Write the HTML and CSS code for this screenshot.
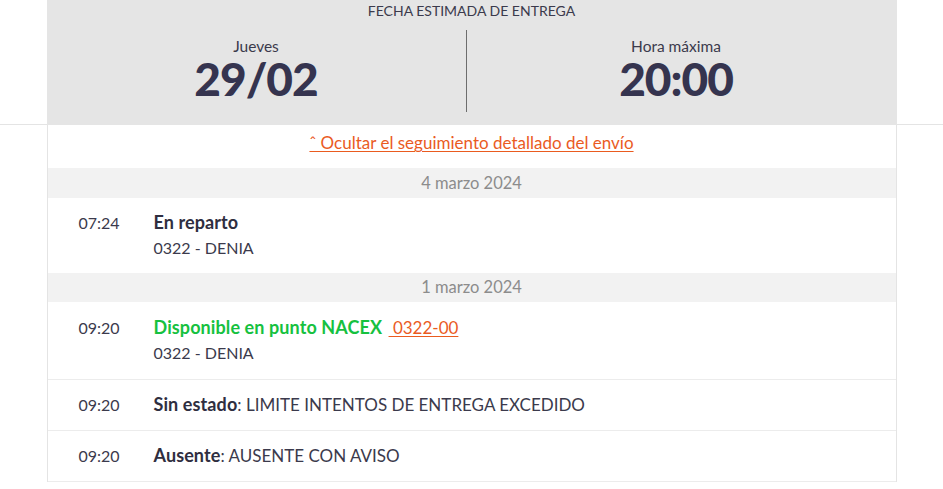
FILE: index.html
```html
<!DOCTYPE html>
<html lang="es">
<head>
<meta charset="utf-8">
<title>Seguimiento</title>
<link rel="stylesheet" href="styles.css">
</head>
<body>
<div class="top">
  <div class="hero">
    <div class="hero-title">FECHA ESTIMADA DE ENTREGA</div>
    <div class="hero-cols">
      <div class="hero-col hero-col-left">
        <div class="hero-label">Jueves</div>
        <div class="hero-value">29/02</div>
      </div>
      <div class="hero-col">
        <div class="hero-label">Hora máxima</div>
        <div class="hero-value">20:00</div>
      </div>
    </div>
  </div>
</div>
<div class="panel">
  <div class="toggle"><a href="#" class="toggle-link">ˆ Ocultar el seguimiento detallado del envío</a></div>
  <div class="day">4 marzo 2024</div>
  <div class="event event-first">
    <div class="time">07:24</div>
    <div class="info">
      <div class="line"><b>En reparto</b></div>
      <div class="line place">0322 - DENIA</div>
    </div>
  </div>
  <div class="day day-short">1 marzo 2024</div>
  <div class="event event-double">
    <div class="time">09:20</div>
    <div class="info">
      <div class="line"><b class="green">Disponible en punto NACEX</b> <a href="#" class="code-link">&nbsp;0322-00</a></div>
      <div class="line place">0322 - DENIA</div>
    </div>
  </div>
  <div class="event">
    <div class="time">09:20</div>
    <div class="info"><div class="line"><b>Sin estado</b>: LIMITE INTENTOS DE ENTREGA EXCEDIDO</div></div>
  </div>
  <div class="event">
    <div class="time">09:20</div>
    <div class="info"><div class="line"><b>Ausente</b>: AUSENTE CON AVISO</div></div>
  </div>
</div>
</body>
</html>
```
FILE: styles.css
```css
* { box-sizing: border-box; }
html, body { margin: 0; padding: 0; background: #fff; }
body {
  font-family: Lato, "Open Sans", "Liberation Sans", sans-serif;
  color: #3b3a4c;
  font-size: 16px;
}
.top {
  height: 125px;
  border-bottom: 1px solid #e4e4e4;
}
.hero {
  width: 850px;
  height: 125px;
  margin: 0 auto;
  background: #e5e5e5;
  padding-top: 2px;
}
.hero-title {
  text-align: center;
  font-size: 14px;
  line-height: 18px;
  color: #3b3a4c;
}
.hero-cols {
  display: flex;
  padding-right: 11px;
  margin-top: 10px;
}
.hero-col {
  flex: 1;
  text-align: center;
  height: 82px;
}
.hero-col-left { border-right: 1px solid #6d6d6d; }
.hero-label {
  font-size: 15.5px;
  line-height: 18px;
  margin-top: 7px;
  color: #3b3a4c;
}
.hero-value {
  font-size: 46px;
  font-weight: 900;
  letter-spacing: -1px;
  line-height: 46px;
  color: #35344f;
  margin-top: 1px;
}
.panel {
  width: 850px;
  margin: 0 auto;
  border-left: 1px solid #e4e4e4;
  border-right: 1px solid #e4e4e4;
}
.toggle {
  height: 43px;
  text-align: center;
  padding-top: 8px;
  line-height: 20px;
  font-size: 17px;
}
.toggle-link, .code-link {
  color: #ea5b1f;
  text-decoration: underline;
  text-underline-offset: 2px;
  text-decoration-thickness: 1px;
}
.day {
  height: 30px;
  background: #f2f2f2;
  text-align: center;
  color: #8c8c8c;
  font-size: 16.5px;
  line-height: 30px;
}
.day-short { height: 29px; line-height: 29px; }
.event {
  display: flex;
  padding: 12px 0 13px 31px;
  line-height: 25px;
  border-bottom: 1px solid #ececec;
}
.event-first { border-bottom: none; padding: 12px 0 13px 31px; }
.event-double { padding-top: 13px; padding-bottom: 14px; }
.time { width: 75px; flex: none; font-size: 16px; }
.info { font-size: 17px; }
.line { height: 25px; white-space: nowrap; }
.place { font-size: 16px; }
.info b { font-weight: 700; font-size: 18px; letter-spacing: 0.1px; color: #2f2e40; }
.info b.green { color: #16c13f; }
.code-link { margin-left: 2px; }
```
